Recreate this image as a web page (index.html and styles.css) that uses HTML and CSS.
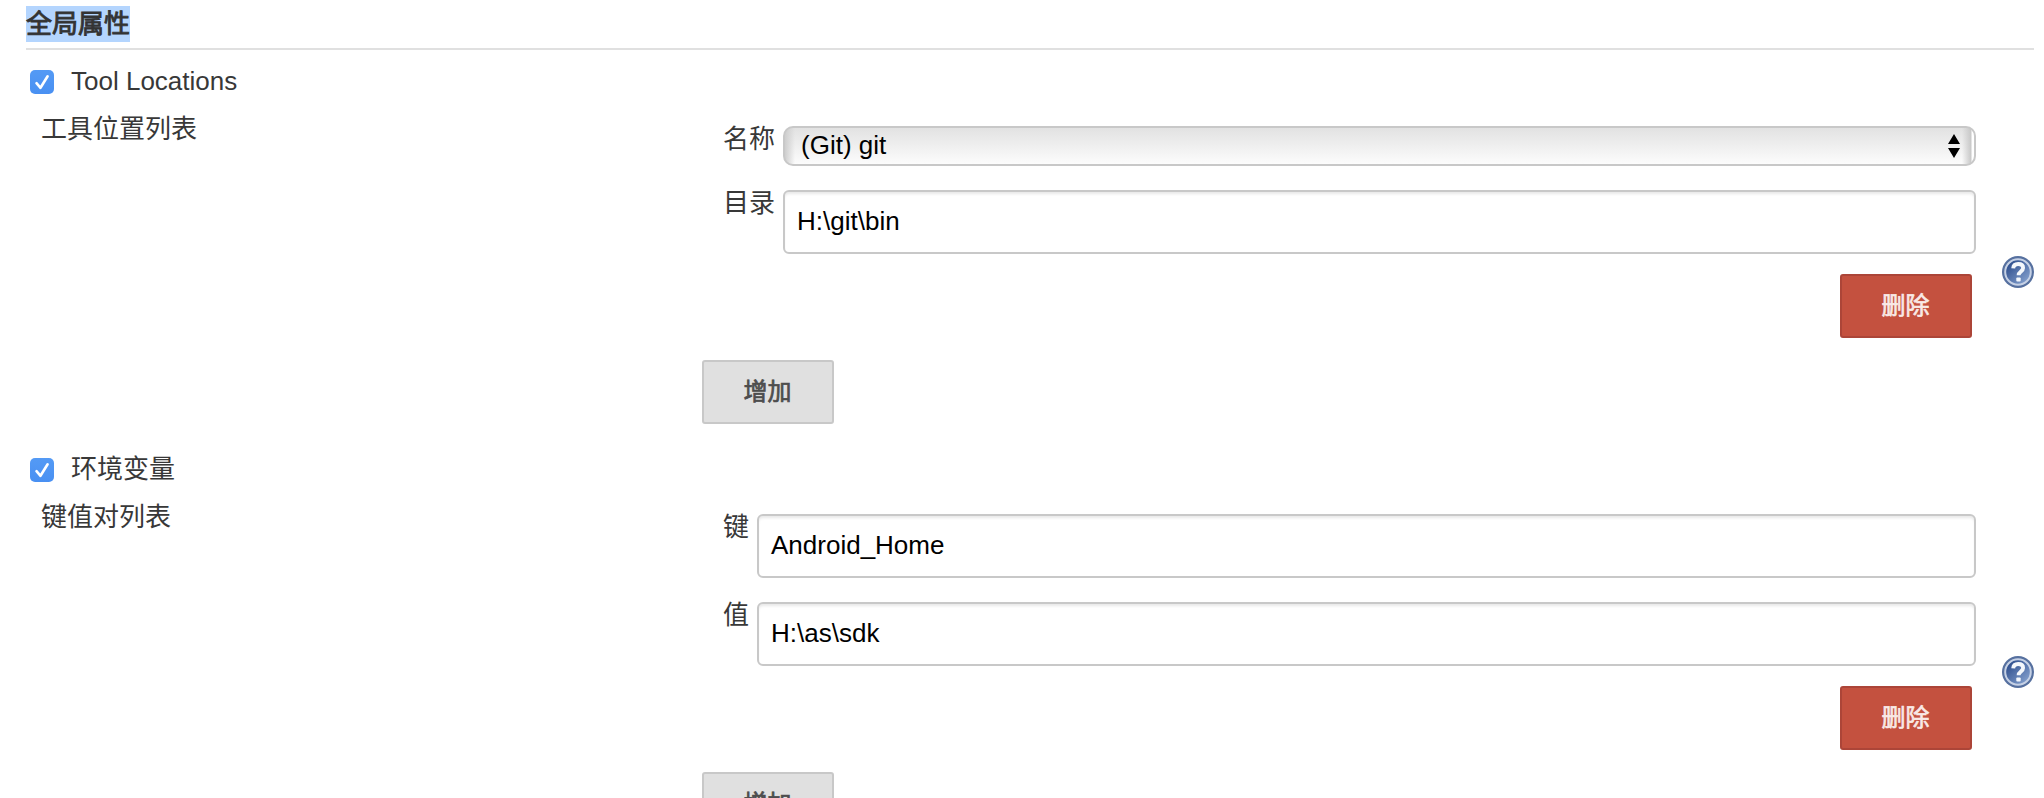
FILE: index.html
```html
<!DOCTYPE html>
<html lang="zh-CN">
<head>
<meta charset="utf-8">
<title>全局属性</title>
<link rel="stylesheet" href="styles.css">
</head>
<body>
<main class="page">
  <svg class="defs" width="0" height="0">
    <defs>
      <linearGradient id="disc" x1="0" y1="0" x2="1" y2="1">
        <stop offset="0.15" stop-color="#2f4f8e"/>
        <stop offset="0.9" stop-color="#86a2cf"/>
      </linearGradient>
      <symbol id="help" viewBox="0 0 32 32">
        <circle cx="16" cy="16" r="16" fill="#56709f"/>
        <circle cx="16" cy="16" r="12.800" fill="url(#disc)" stroke="#c6d1e5" stroke-width="2"/>
        <path d="M11.200 12.400C11.400 9.300 13.300 8 16.200 8c3 0 4.900 1.500 4.900 4 0 3.400-4.500 3.500-4.500 7.200" fill="none" stroke="#f4f7fb" stroke-width="3.900"/>
        <rect x="14.300" y="21.400" width="4.400" height="4" rx="1" fill="#f4f7fb"/>
      </symbol>
      <symbol id="tick" viewBox="0 0 24 24">
        <path d="M6.500 13.200l4 4.600L17.600 6.300" fill="none" stroke="#fff" stroke-width="2.600" stroke-linecap="round" stroke-linejoin="round"/>
      </symbol>
    </defs>
  </svg>
  <h2 class="heading"><span class="selected">全局属性</span></h2>

  <section>
    <label class="toggle"><span class="checkbox"><svg width="24" height="24"><use href="#tick"/></svg></span><span class="caption">Tool Locations</span></label>
    <div class="body">
      <div class="title">工具位置列表</div>
      <div class="list">
        <div class="field"><span class="name">名称</span><div class="select"><span class="value">(Git) git</span><svg class="arrows" width="12" height="24" viewBox="0 0 12 24"><path d="M6 0l6 10H0zM6 24L0 14h12z"/></svg></div></div>
        <div class="field"><span class="name">目录</span><div class="input">H:\git\bin</div></div>
        <div class="actions"><button class="button danger">删除</button></div>
        <button class="button">增加</button>
      </div>
      <svg class="help" width="32" height="32"><use href="#help"/></svg>
    </div>
  </section>

  <section>
    <label class="toggle"><span class="checkbox"><svg width="24" height="24"><use href="#tick"/></svg></span><span class="caption">环境变量</span></label>
    <div class="body">
      <div class="title">键值对列表</div>
      <div class="list">
        <div class="field"><span class="name">键</span><div class="input">Android_Home</div></div>
        <div class="field"><span class="name">值</span><div class="input">H:\as\sdk</div></div>
        <div class="actions"><button class="button danger">删除</button></div>
        <button class="button">增加</button>
      </div>
      <svg class="help" width="32" height="32"><use href="#help"/></svg>
    </div>
  </section>
</main>
</body>
</html>
```
FILE: styles.css
```css
* { box-sizing: border-box; }
body {
  margin: 0;
  background: #fff;
  color: #383838;
  font: 26px/36px "Liberation Sans", "Noto Sans CJK SC", sans-serif;
}
.defs { display: block; }
.page {
  height: 798px;
  padding: 6px 10px 0 26px;
  overflow: hidden;
}
.heading {
  margin: 0;
  padding-bottom: 6px;
  border-bottom: 2px solid #e0e0e0;
  color: #333;
  font-size: 26px;
  font-weight: normal;
  -webkit-text-stroke: 0.9px #333;
}
.selected {
  display: block;
  width: 104px;
  height: 36px;
  line-height: 36px;
  background: #b4d5fe;
  white-space: nowrap;
}
.toggle {
  display: flex;
  align-items: center;
  gap: 17px;
  height: 64px;
  padding-left: 4px;
}
.caption { padding-bottom: 2px; }
.checkbox {
  width: 24px;
  height: 24px;
  border-radius: 5px;
  background: linear-gradient(#549af5, #4990f2);
}
.checkbox svg { display: block; }
.body {
  display: grid;
  grid-template-columns: 676px 1fr 58px;
  align-items: center;
  padding: 6px 0 14px;
}
.title {
  align-self: start;
  margin-top: -6px;
  padding-left: 15px;
  line-height: 31px;
}
.list {
  display: flex;
  flex-direction: column;
  align-items: flex-start;
  padding-top: 6px;
}
.field {
  display: flex;
  align-items: flex-start;
  gap: 8px;
  width: 100%;
  margin-bottom: 24px;
  padding-left: 21px;
}
.name { height: 40px; line-height: 27px; }
.input, .select {
  flex: 1;
  border: 2px solid #c8c8c8;
  color: #000;
}
.input {
  height: 64px;
  padding-left: 12px;
  border-radius: 6px;
  line-height: 58px;
  box-shadow: inset 0 3px 3px -1px #e8e8e8;
}
.select {
  display: flex;
  align-items: center;
  justify-content: space-between;
  height: 40px;
  padding: 0 14px 0 16px;
  border-radius: 10px;
  background: linear-gradient(90deg, #cecece 0, #cecece00 10px, #cecece00 calc(100% - 12px), #c8c8c8 calc(100% - 3px), #fff calc(100% - 2px)), linear-gradient(#e2e2e2, #fcfcfc);
}
.value { padding-bottom: 2px; }
.arrows { display: block; fill: #000; }
.actions {
  display: flex;
  justify-content: flex-end;
  width: 100%;
  margin: -4px 0 22px;
  padding-right: 4px;
}
.button {
  width: 132px;
  height: 64px;
  padding: 0 1px 0 0;
  border: 2px solid #c8c8c8;
  border-radius: 3px;
  background: #e0e0e0;
  color: #4d4d4d;
  font: 24px/58px "Liberation Sans", "Noto Sans CJK SC", sans-serif;
  -webkit-text-stroke: 0.7px currentColor;
}
.danger {
  border-color: #ac4538;
  background: #c4513f;
  color: #f9e9e6;
}
.help { display: block; justify-self: end; }
```
